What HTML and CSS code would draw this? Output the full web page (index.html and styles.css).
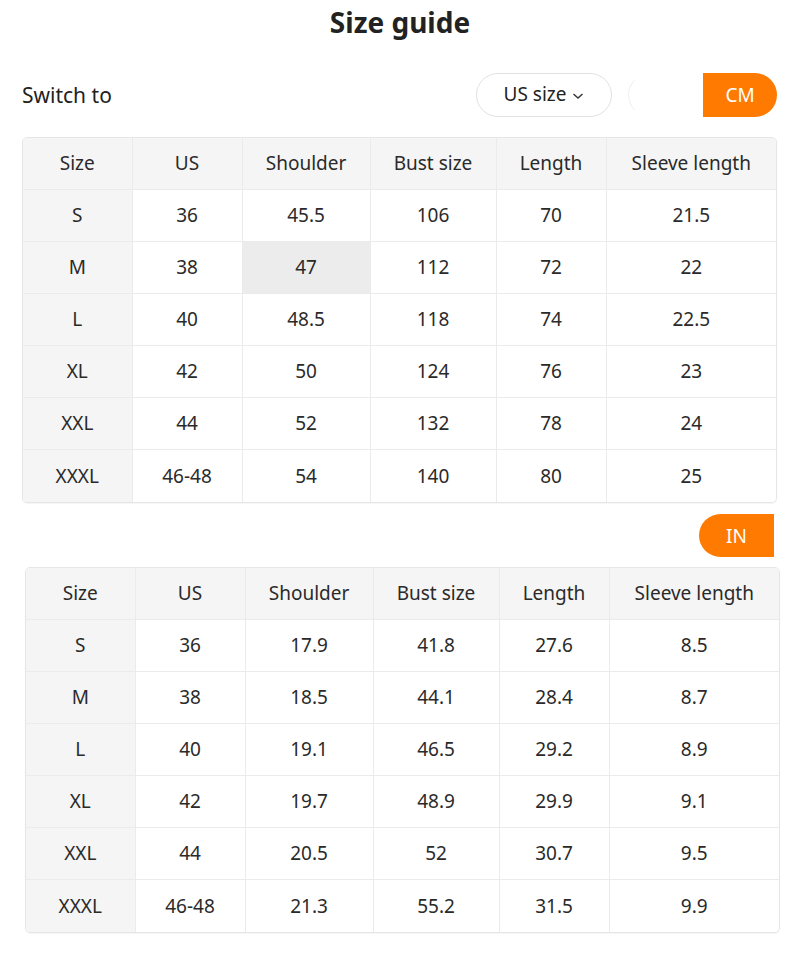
FILE: index.html
```html
<!DOCTYPE html>
<html>
<head>
<meta charset="utf-8">
<link rel="stylesheet" href="styles.css">
</head>
<body>
<div class="page">
  <h1 class="title">Size guide</h1>
  <div class="controls">
    <span class="switch-label">Switch to</span>
    <div class="control-group">
      <button class="select-pill">US size <svg class="chev" width="12" height="8" viewBox="0 0 12 8"><path d="M1.5 2 L6 6 L10.5 2" fill="none" stroke="#333" stroke-width="1.4"/></svg></button>
      <div class="unit-toggle">
        <span class="unit-ghost"></span>
        <span class="unit-btn unit-right">CM</span>
      </div>
    </div>
  </div>
  <div class="table-wrap t1">
    <table class="size-table">
      <colgroup><col style="width:109px"><col style="width:110px"><col style="width:128px"><col style="width:126px"><col style="width:110px"><col></colgroup>
      <thead><tr><th>Size</th><th>US</th><th>Shoulder</th><th>Bust size</th><th>Length</th><th>Sleeve length</th></tr></thead>
      <tbody>
        <tr><td class="sz">S</td><td>36</td><td>45.5</td><td>106</td><td>70</td><td>21.5</td></tr>
        <tr><td class="sz">M</td><td>38</td><td class="hover">47</td><td>112</td><td>72</td><td>22</td></tr>
        <tr><td class="sz">L</td><td>40</td><td>48.5</td><td>118</td><td>74</td><td>22.5</td></tr>
        <tr><td class="sz">XL</td><td>42</td><td>50</td><td>124</td><td>76</td><td>23</td></tr>
        <tr><td class="sz">XXL</td><td>44</td><td>52</td><td>132</td><td>78</td><td>24</td></tr>
        <tr><td class="sz">XXXL</td><td>46-48</td><td>54</td><td>140</td><td>80</td><td>25</td></tr>
      </tbody>
    </table>
  </div>
  <div class="in-row">
    <span class="unit-btn unit-left">IN</span>
  </div>
  <div class="table-wrap t2">
    <table class="size-table">
      <colgroup><col style="width:109px"><col style="width:110px"><col style="width:128px"><col style="width:126px"><col style="width:110px"><col></colgroup>
      <thead><tr><th>Size</th><th>US</th><th>Shoulder</th><th>Bust size</th><th>Length</th><th>Sleeve length</th></tr></thead>
      <tbody>
        <tr><td class="sz">S</td><td>36</td><td>17.9</td><td>41.8</td><td>27.6</td><td>8.5</td></tr>
        <tr><td class="sz">M</td><td>38</td><td>18.5</td><td>44.1</td><td>28.4</td><td>8.7</td></tr>
        <tr><td class="sz">L</td><td>40</td><td>19.1</td><td>46.5</td><td>29.2</td><td>8.9</td></tr>
        <tr><td class="sz">XL</td><td>42</td><td>19.7</td><td>48.9</td><td>29.9</td><td>9.1</td></tr>
        <tr><td class="sz">XXL</td><td>44</td><td>20.5</td><td>52</td><td>30.7</td><td>9.5</td></tr>
        <tr><td class="sz">XXXL</td><td>46-48</td><td>21.3</td><td>55.2</td><td>31.5</td><td>9.9</td></tr>
      </tbody>
    </table>
  </div>
</div>
</body>
</html>
```
FILE: styles.css
```css
* { box-sizing: border-box; }
html, body { margin: 0; padding: 0; background: #fff; }
body {
  font-family: "Noto Sans", "Open Sans", sans-serif;
  color: #2a2a2a;
  width: 800px;
  height: 968px;
  overflow: hidden;
}
.page { padding: 0; }
.title {
  margin: 0;
  height: 45px;
  line-height: 44px;
  text-align: center;
  font-size: 28px;
  font-weight: 700;
  color: #222;
}
.controls {
  margin-top: 28px;
  height: 44px;
  display: flex;
  align-items: center;
  justify-content: space-between;
  padding: 0 23px 0 22px;
}
.switch-label { font-size: 21px; color: #222; }
.control-group { display: flex; align-items: center; }
.select-pill {
  width: 136px;
  height: 44px;
  border: 1px solid #e2e2e2;
  border-radius: 22px;
  background: #fff;
  font-family: inherit;
  font-size: 19px;
  color: #222;
  display: flex;
  align-items: center;
  justify-content: center;
  gap: 6px;
  padding: 0 0 2px;
}
.chev { margin-top: 3px; }
.unit-toggle { display: flex; margin-left: 16px; }
.unit-ghost {
  width: 75px;
  height: 44px;
  border: 1px solid #f0f0f0;
  border-right: none;
  border-top-color: transparent;
  border-bottom-color: transparent;
  border-radius: 22px 0 0 22px;
}
.unit-btn {
  width: 74px;
  height: 44px;
  background: #fe7a00;
  color: #fff;
  font-size: 19px;
  display: flex;
  align-items: center;
  justify-content: center;
}
.unit-right { border-radius: 0 22px 22px 0; }
.unit-left { border-radius: 22px 0 0 22px; height: 43px; width: 75px; }
.table-wrap {
  width: 755px;
  border: 1px solid #e6e6e6;
  border-radius: 5px;
  overflow: hidden;
  box-shadow: 0 1px 1px rgba(0,0,0,0.04);
}
.t1 { margin: 20px 0 0 22px; }
.t2 { margin: 10px 0 0 25px; }
.in-row {
  margin-top: 11px;
  display: flex;
  justify-content: flex-end;
  padding-right: 26px;
}
.size-table {
  width: 100%;
  border-collapse: collapse;
  table-layout: fixed;
}
.size-table th, .size-table td {
  height: 52px;
  padding: 0;
  text-align: center;
  vertical-align: middle;
  font-size: 19px;
  font-weight: 400;
  color: #2a2a2a;
  border-right: 1px solid #ebebeb;
  border-bottom: 1px solid #ebebeb;
}
.size-table th { height: 51px; }
.size-table th:last-child, .size-table td:last-child { border-right: none; }
.size-table tbody tr:last-child td { border-bottom: none; height: 53px; }
.size-table th { background: #f5f5f5; }
.size-table td.sz { background: #f5f5f5; }
.size-table td.hover { background: #ececec; }
```
